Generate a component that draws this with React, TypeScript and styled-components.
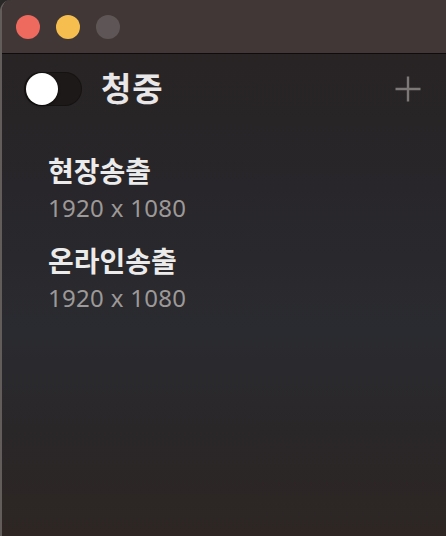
import styled, { createGlobalStyle } from "styled-components";

const GlobalStyle = createGlobalStyle`
  html, body {
    margin: 0;
    padding: 0;
    background: #2a2727;
  }
  body {
    font-family: "Noto Sans", "Noto Sans CJK KR", sans-serif;
  }
`;

const Window = styled.div`
  width: 446px;
  height: 536px;
  box-sizing: border-box;
  border-top-left-radius: 11px;
  border-left: 2px solid #625c5b;
  overflow: hidden;
  display: flex;
  flex-direction: column;
  background: linear-gradient(
    180deg,
    #282322 0%,
    #28262a 35%,
    #2a2b30 62%,
    #2a2729 80%,
    #2d2623 100%
  );
`;

const TitleBar = styled.div`
  height: 53px;
  flex-shrink: 0;
  background: #403736;
  border-bottom: 1px solid #0e0c0c;
  display: flex;
  align-items: center;
  gap: 16px;
  padding-left: 14px;
`;

const Light = styled.span<{ $color: string }>`
  width: 24px;
  height: 24px;
  border-radius: 50%;
  background: ${(p) => p.$color};
`;

const Header = styled.div`
  display: flex;
  align-items: center;
  padding: 18px 24px 0 22px;
  height: 34px;
`;

const Toggle = styled.div`
  width: 58px;
  height: 34px;
  border-radius: 17px;
  background: #1d1918;
  box-shadow: inset 0 0 0 1px rgba(0, 0, 0, 0.25);
  display: flex;
  align-items: center;
  padding-left: 2px;
  box-sizing: border-box;
`;

const Knob = styled.span`
  width: 32px;
  height: 32px;
  border-radius: 50%;
  background: #ffffff;
  box-shadow: 0 1px 3px rgba(0, 0, 0, 0.6);
`;

const Title = styled.h1`
  margin: 0 0 0 19px;
  font-size: 33px;
  font-weight: 700;
  line-height: 34px;
  letter-spacing: 1px;
  color: #e9e7e7;
  flex: 1;
`;

const AddButton = styled.button`
  background: none;
  border: none;
  padding: 0;
  width: 28px;
  height: 28px;
  display: flex;
  align-items: center;
  justify-content: center;
  cursor: pointer;
`;

const List = styled.div`
  display: flex;
  flex-direction: column;
  gap: 22px;
  padding: 48px 0 0 46px;
`;

const Item = styled.div`
  display: flex;
  flex-direction: column;
  gap: 6px;
`;

const ItemName = styled.div`
  font-size: 28px;
  font-weight: 700;
  color: #ecebeb;
  line-height: 34px;
`;

const ItemSize = styled.div`
  font-size: 24px;
  color: #9d9998;
  line-height: 28px;
  letter-spacing: 0.3px;
`;

const outputs = [
  { name: "현장송출", size: "1920 x 1080" },
  { name: "온라인송출", size: "1920 x 1080" },
];

export default function App() {
  return (
    <>
      <GlobalStyle />
      <Window>
        <TitleBar>
          <Light $color="#ee695e" />
          <Light $color="#f5be4f" />
          <Light $color="#5e5656" />
        </TitleBar>
        <Header>
          <Toggle>
            <Knob />
          </Toggle>
          <Title>청중</Title>
          <AddButton aria-label="추가">
            <svg width="28" height="28" viewBox="0 0 28 28">
              <path
                d="M14 1.5v25M1.5 14h25"
                stroke="#7c7877"
                strokeWidth="2.4"
                strokeLinecap="butt"
              />
            </svg>
          </AddButton>
        </Header>
        <List>
          {outputs.map((o) => (
            <Item key={o.name}>
              <ItemName>{o.name}</ItemName>
              <ItemSize>{o.size}</ItemSize>
            </Item>
          ))}
        </List>
      </Window>
    </>
  );
}
